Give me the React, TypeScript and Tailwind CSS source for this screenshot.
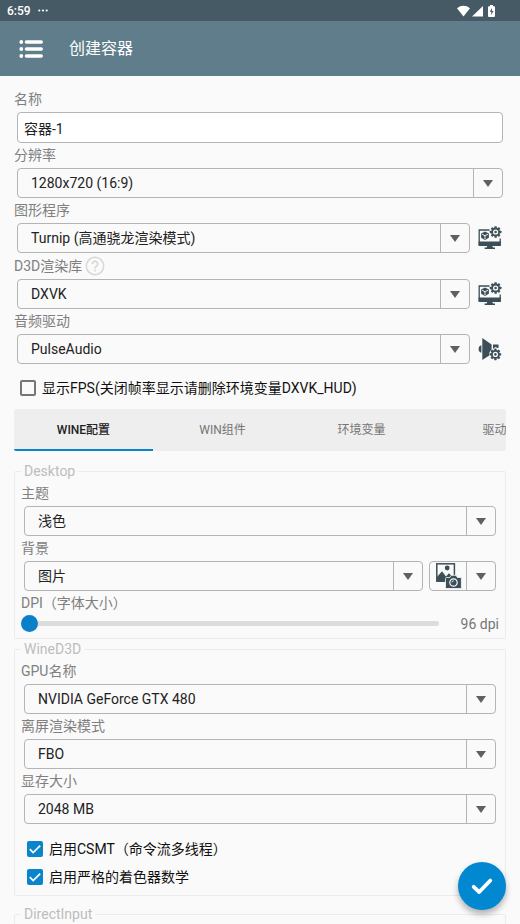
import React, { useId, useState } from "react";

const GEAR_TEETH = [0, 45, 90, 135, 180, 225, 270, 315];

const Gear: React.FC<{ cx: number; cy: number }> = ({ cx, cy }) => (
  <g>
    {GEAR_TEETH.map((angle) => (
      <rect
        key={angle}
        x={cx - 1.2}
        y={cy - 5.8}
        width="2.4"
        height="3"
        rx="0.4"
        fill="currentColor"
        transform={`rotate(${angle} ${cx} ${cy})`}
      />
    ))}
    <circle cx={cx} cy={cy} r="3.5" fill="#fafafa" stroke="currentColor" strokeWidth="1.8" />
    <circle cx={cx} cy={cy} r="1.3" fill="currentColor" />
  </g>
);

const MonitorGearIcon: React.FC = () => (
  <svg viewBox="0 0 24 24" className="h-6 w-6" aria-hidden="true">
    <path d="M11.5 4H1.2v15h21V12.5" fill="none" stroke="currentColor" strokeWidth="1.3" />
    <path d="M.6 15.500h22.200v3.500a.9.9 0 0 1-.9.9H1.500a.9.9 0 0 1-.9-.9z" fill="currentColor" />
    <path d="M9.4 19.800h4.800l.8 1.700h2v1.400H6.600v-1.400h2z" fill="currentColor" />
    <path d="M7 5.600l3.900 1.900v4.300L7 14.100l-3.900-2.300V7.500z" fill="currentColor" />
    <path d="M4 8.200l3 1.600 3-1.600M7 9.800v3.300" fill="none" stroke="#fafafa" strokeWidth="0.9" />
    <Gear cx={17.6} cy={6} />
  </svg>
);

const SpeakerGearIcon: React.FC = () => (
  <svg viewBox="0 0 24 24" className="h-6 w-6" aria-hidden="true">
    <path d="M3.4 8.200v7.600C1.500 15.500.6 14 .6 12s.9-3.500 2.800-3.800z" fill="currentColor" />
    <path d="M4.300 1L13.600 7.600v9.400L4.300 23z" fill="currentColor" />
    <path d="M15 7.500h5.500V11H19l-1-1-1.500.5L15 13z" fill="currentColor" />
    <circle cx="17.4" cy="17.4" r="6.200" fill="#fafafa" />
    <Gear cx={17.4} cy={17.4} />
  </svg>
);

const PictureCameraIcon: React.FC = () => (
  <svg viewBox="0 0 26 26" className="h-[26px] w-[26px]" aria-hidden="true">
    <rect x="0.8" y="0.8" width="17.6" height="17.4" fill="#fafafa" stroke="currentColor" strokeWidth="1.5" />
    <circle cx="11.2" cy="5" r="2.4" fill="currentColor" />
    <path d="M1 14l5-5.800 4 5.200 3-3.200 5 5v3H1z" fill="currentColor" />
    <path
      d="M10.500 14.500h3.300l1.300-2.200h5l1.300 2.200h3a1 1 0 0 1 1 1v9a1 1 0 0 1-1 1H10.500a1 1 0 0 1-1-1v-9a1 1 0 0 1 1-1z"
      fill="currentColor"
      stroke="#fafafa"
      strokeWidth="0.8"
    />
    <circle cx="17.5" cy="19.5" r="3.7" fill="none" stroke="#fafafa" strokeWidth="1.2" />
    <path d="M15.900 19.300a1.700 1.700 0 0 1 1.800-1.500" fill="none" stroke="#fafafa" strokeWidth="0.9" />
  </svg>
);

const DropArrow: React.FC = () => (
  <span className="pointer-events-none absolute inset-y-0 right-0 flex w-[29px] items-center justify-center border-l border-[#b4b4b4]">
    <svg viewBox="0 0 10 7" className="h-[7px] w-[10px]" aria-hidden="true">
      <path d="M0 0h10L5 7z" fill="#606060" />
    </svg>
  </span>
);

type SelectBoxProps = {
  id: string;
  options: string[];
};

const SelectBox: React.FC<SelectBoxProps> = ({ id, options }) => (
  <div className="relative h-[30px] min-w-0 flex-1 rounded-[4px] border border-[#b4b4b4]">
    <select
      id={id}
      className="h-full w-full appearance-none bg-transparent pl-[13px] pr-8 text-[14px] text-[#222] outline-none"
    >
      {options.map((option) => (
        <option key={option}>{option}</option>
      ))}
    </select>
    <DropArrow />
  </div>
);

type FieldProps = {
  label: string;
  options: string[];
  help?: boolean;
  action?: React.ReactNode;
  actionLabel?: string;
};

const SelectField: React.FC<FieldProps> = ({ label, options, help, action, actionLabel }) => {
  const id = useId();
  return (
    <div>
      <div className="flex items-center gap-[3px]">
        <label htmlFor={id} className="text-[14px] leading-[25px] text-[#808080]">
          {label}
        </label>
        {help && (
          <button type="button" aria-label="帮助" className="my-[3px] text-[#d8d8d8]">
            <svg viewBox="0 0 20 20" className="h-5 w-5" fill="none" stroke="currentColor" strokeWidth="1.5">
              <circle cx="10" cy="10" r="8.7" />
              <path d="M7.300 8a2.700 2.700 0 1 1 4.200 2.200c-1 .7-1.500 1.100-1.500 2.200" strokeWidth="1.7" />
              <path d="M10 13.800v1.700" strokeWidth="1.7" />
            </svg>
          </button>
        )}
      </div>
      <div className="mx-[3px] flex items-center">
        <SelectBox id={id} options={options} />
        {action && (
          <button type="button" aria-label={actionLabel} className="ml-2 mr-px text-[#3c4f58]">
            {action}
          </button>
        )}
      </div>
    </div>
  );
};

type CheckProps = {
  label: string;
  initial?: boolean;
};

const CheckRow: React.FC<CheckProps> = ({ label, initial = false }) => {
  const [checked, setChecked] = useState(initial);
  return (
    <label className="flex h-7 items-center gap-[6px] pl-[6px] text-[14px] text-[#111]">
      <span className="relative h-4 w-4">
        <input
          type="checkbox"
          checked={checked}
          onChange={() => setChecked(!checked)}
          className="block h-4 w-4 appearance-none rounded-[2px] border-2 border-[#757575] checked:border-[#0a84cb] checked:bg-[#0a84cb]"
        />
        {checked && (
          <svg viewBox="0 0 16 16" className="pointer-events-none absolute inset-0 h-4 w-4" aria-hidden="true">
            <path d="M2.800 8.200l3.400 3.400 7-7" fill="none" stroke="#fff" strokeWidth="1.7" />
          </svg>
        )}
      </span>
      {label}
    </label>
  );
};

const Group: React.FC<{ title: string; children?: React.ReactNode }> = ({ title, children }) => (
  <fieldset className="min-w-0 rounded-[2px] border border-[#ececec] px-[6px]">
    <legend className="px-[3px] text-[14px] leading-5 text-[#bdbdbd]">{title}</legend>
    {children}
  </fieldset>
);

const StatusBar: React.FC = () => (
  <div className="flex h-[21px] shrink-0 items-center bg-[#455a64] pl-[7px] pr-6 text-white">
    <span className="text-[12px] font-medium">6:59</span>
    <svg viewBox="0 0 10 3" className="ml-[7px] h-[3px] w-[10px]" fill="currentColor" aria-hidden="true">
      <circle cx="1.3" cy="1.5" r="1.1" />
      <circle cx="5" cy="1.5" r="1.1" />
      <circle cx="8.7" cy="1.5" r="1.1" />
    </svg>
    <svg viewBox="0 0 40 12" className="ml-auto h-3 w-10" fill="currentColor" aria-hidden="true">
      <path d="M1 3.200C5-.1 10-.1 14 3.200L7.500 11.500z" />
      <path d="M27 1v10.500H16z" />
      <path d="M34 1.200V0h3v1.200h1a1 1 0 0 1 1 1V11a1 1 0 0 1-1 1h-5a1 1 0 0 1-1-1V2.200a1 1 0 0 1 1-1z" />
      <path d="M36 3l-2.200 3.800h1.500V10l2.200-3.900H36z" fill="#455a64" />
    </svg>
  </div>
);

const Toolbar: React.FC = () => (
  <header className="flex h-[55px] shrink-0 items-center bg-[#607d8b] pl-[19px] text-white">
    <button type="button" aria-label="菜单">
      <svg viewBox="0 0 24 20" className="h-5 w-6" aria-hidden="true">
        {[3, 10, 17].map((y) => (
          <g key={y}>
            <circle cx="2.3" cy={y} r="1.9" fill="currentColor" />
            <path d={`M7.500 ${y}H22.200`} stroke="currentColor" strokeWidth="3.6" strokeLinecap="round" />
          </g>
        ))}
      </svg>
    </button>
    <h1 className="ml-[26px] text-[16px]">创建容器</h1>
  </header>
);

const tabs = ["WINE配置", "WIN组件", "环境变量", "驱动器"];

const App: React.FC = () => {
  const [activeTab, setActiveTab] = useState(0);
  const [dpi, setDpi] = useState(96);

  return (
    <div className="relative flex h-screen flex-col overflow-hidden bg-[#fafafa] font-[Roboto,'Noto_Sans_CJK_SC',sans-serif]">
      <StatusBar />
      <Toolbar />

      <main className="min-h-0 flex-1 overflow-y-auto px-[14px] pt-[11px] [scrollbar-width:none]">
        <label htmlFor="name" className="block text-[14px] leading-[25px] text-[#808080]">
          名称
        </label>
        <div className="mx-[3px] flex">
          <input
            id="name"
            type="text"
            defaultValue="容器-1"
            className="h-[31px] w-full rounded-[4px] border border-[#b4b4b4] bg-white px-[6px] text-[14px] text-[#222] outline-none"
          />
        </div>
        <SelectField label="分辨率" options={["1280x720 (16:9)"]} />
        <SelectField
          label="图形程序"
          options={["Turnip (高通骁龙渲染模式)"]}
          action={<MonitorGearIcon />}
          actionLabel="图形程序设置"
        />
        <SelectField
          label="D3D渲染库"
          options={["DXVK"]}
          help
          action={<MonitorGearIcon />}
          actionLabel="渲染库设置"
        />
        <SelectField
          label="音频驱动"
          options={["PulseAudio"]}
          action={<SpeakerGearIcon />}
          actionLabel="音频设置"
        />

        <div className="pt-[10px] pb-[7px]">
          <CheckRow label="显示FPS(关闭帧率显示请删除环境变量DXVK_HUD)" />
        </div>

        <div role="tablist" className="flex h-[42px] overflow-hidden rounded-[2px] bg-[#eee]">
          {tabs.map((tab, index) => (
            <button
              key={tab}
              type="button"
              role="tab"
              aria-selected={activeTab === index}
              onClick={() => setActiveTab(index)}
              className={`w-[139px] shrink-0 border-b-2 pt-[2px] text-[12px] ${
                activeTab === index
                  ? "border-[#0a84cb] font-medium text-[#222]"
                  : "border-transparent text-[#757575]"
              }`}
            >
              {tab}
            </button>
          ))}
        </div>

        <div className="pt-[10px]">
          <Group title="Desktop">
            <SelectField label="主题" options={["浅色"]} />
            <label htmlFor="background" className="block text-[14px] leading-[25px] text-[#808080]">
              背景
            </label>
            <div className="mx-[3px] flex gap-[6px]">
              <SelectBox id="background" options={["图片"]} />
              <button
                type="button"
                aria-label="选择图片"
                className="relative flex h-[30px] w-[67px] items-center rounded-[4px] border border-[#b4b4b4] pl-[6px] text-[#3c4f58]"
              >
                <PictureCameraIcon />
                <DropArrow />
              </button>
            </div>
            <label htmlFor="dpi" className="block text-[14px] leading-[25px] text-[#808080]">
              DPI（字体大小）
            </label>
            <div className="flex h-4 items-center pb-px">
              <input
                id="dpi"
                type="range"
                min={96}
                max={480}
                value={dpi}
                onChange={(e) => setDpi(Number(e.target.value))}
                className="h-4 min-w-0 flex-1 appearance-none bg-transparent [&::-webkit-slider-runnable-track]:h-[5px] [&::-webkit-slider-runnable-track]:rounded-full [&::-webkit-slider-runnable-track]:bg-[#dcdcdc] [&::-webkit-slider-thumb]:-mt-[6px] [&::-webkit-slider-thumb]:h-[17px] [&::-webkit-slider-thumb]:w-[17px] [&::-webkit-slider-thumb]:appearance-none [&::-webkit-slider-thumb]:rounded-full [&::-webkit-slider-thumb]:bg-[#0a7fca]"
              />
              <output htmlFor="dpi" className="w-[60px] text-right text-[14px] leading-4 text-[#757575]">
                {dpi} dpi
              </output>
            </div>
            <div className="h-[6px]" />
          </Group>

          <Group title="WineD3D">
            <SelectField label="GPU名称" options={["NVIDIA GeForce GTX 480"]} />
            <SelectField label="离屏渲染模式" options={["FBO"]} />
            <SelectField label="显存大小" options={["2048 MB"]} />
            <div className="pt-[11px] pb-1">
              <CheckRow label="启用CSMT（命令流多线程）" initial />
              <CheckRow label="启用严格的着色器数学" initial />
            </div>
          </Group>

          <div className="pt-2">
            <Group title="DirectInput">
              <div className="h-16" />
            </Group>
          </div>
        </div>
      </main>

      <button
        type="button"
        aria-label="确认"
        className="absolute right-[14px] bottom-[14px] flex h-12 w-12 items-center justify-center rounded-full bg-[#0288d1] text-white shadow-[0_4px_6px_rgba(0,0,0,0.3)]"
      >
        <svg viewBox="0 0 24 24" className="h-6 w-6" aria-hidden="true">
          <path
            d="M3.700 12.800l5.500 5.200L20.300 6.500"
            fill="none"
            stroke="currentColor"
            strokeWidth="3.8"
            strokeLinecap="round"
            strokeLinejoin="round"
          />
        </svg>
      </button>
    </div>
  );
};

export default App;
